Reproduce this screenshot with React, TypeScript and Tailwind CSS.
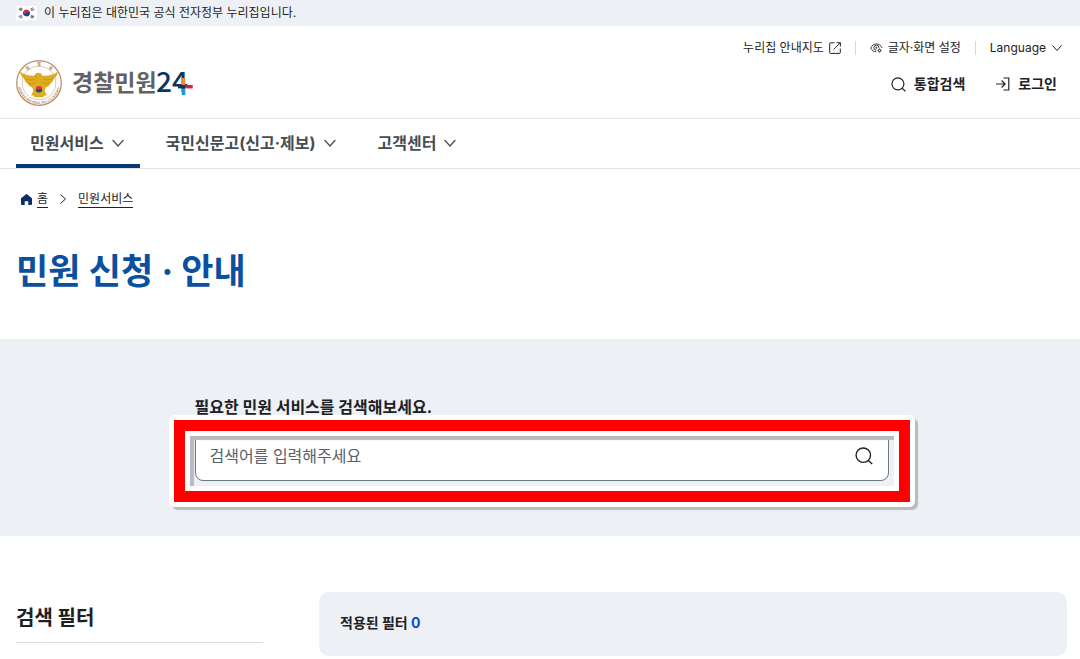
import React from "react";

type IconProps = { className?: string };

function Chevron({ className = "" }: IconProps) {
  return (
    <svg viewBox="0 0 12 12" className={className} fill="none" stroke="currentColor" strokeWidth="1.200" aria-hidden="true">
      <path d="M.6 3 6 9l5.400-6" />
    </svg>
  );
}

function SearchIcon({ className = "" }: IconProps) {
  return (
    <svg viewBox="0 0 18 18" className={className} fill="none" stroke="currentColor" strokeWidth="1.400" aria-hidden="true">
      <circle cx="8.300" cy="8.200" r="7.200" />
      <path d="m13.300 13.400 3.900 3.700" />
    </svg>
  );
}

function LoginIcon() {
  return (
    <svg viewBox="0 0 14 14" className="size-3.5" fill="none" stroke="currentColor" strokeWidth="1.200" aria-hidden="true">
      <path d="M0 7h8.800M5.600 3.500 9.100 7l-3.500 3.500M7.500 1h5.300v12H7.500" />
    </svg>
  );
}

function ExternalIcon() {
  return (
    <svg viewBox="0 0 12 12" className="size-3" fill="none" stroke="currentColor" aria-hidden="true">
      <path d="M5.500.8H1.500a.8.800 0 0 0-.8.800v9a.8.800 0 0 0 .8.800h9a.8.800 0 0 0 .8-.8v-4M7.500.7h3.900v3.800M11.300.8 4.500 7.600" />
    </svg>
  );
}

function DisplayIcon() {
  return (
    <svg viewBox="0 0 13 12" className="h-3 w-[13px]" fill="none" stroke="currentColor" strokeWidth=".9" aria-hidden="true">
      <path d="M6.200 9.800C3.700 9.800 1.800 8.300.7 6 1.900 3.500 3.900 1.900 6.400 1.900s4.500 1.600 5.700 4.100" />
      <path d="M8.900 5.800A2.500 2.500 0 1 0 6.300 8.200" />
      <circle cx="6.400" cy="5.800" r=".6" />
      <circle cx="9.500" cy="8.500" r="1.200" />
      <path d="M9.500 6.400v.9m0 2.400v.9m-2.100-2.100h.9m2.400 0h.9M8 7l.6.600m1.800 1.800.6.600m0-3-.6.600M8.600 9.400l-.6.600" strokeWidth=".6" />
    </svg>
  );
}

function HomeIcon() {
  return (
    <svg viewBox="0 0 11 11" className="size-[11px]" fill="#0b2d69" aria-hidden="true">
      <path d="M5 .2a.8.800 0 0 1 1 0L10.600 4a1 1 0 0 1 .4.800V10a1 1 0 0 1-1 1H7.300V7.300H3.700V11H1a1 1 0 0 1-1-1V4.800A1 1 0 0 1 .4 4Z" />
    </svg>
  );
}

function Flag() {
  return (
    <svg viewBox="0 0 21 14" className="h-3.5 w-[21px]" aria-hidden="true">
      <path fill="#fff" d="M0 0h21v14H0z" />
      <g transform="rotate(25 10.500 7)">
        <path d="M7.100 7a3.400 3.400 0 0 1 6.800 0Z" fill="#cd2e3a" />
        <path d="M7.100 7a3.400 3.400 0 0 0 6.800 0Z" fill="#0f4796" />
        <circle cx="8.800" cy="7" r="1.700" fill="#cd2e3a" />
        <circle cx="12.200" cy="7" r="1.700" fill="#0f4796" />
      </g>
      <g stroke="#222" strokeWidth=".8">
        <path d="m3 3.900 1.700-2.400m-.8 3L5.600 2.100m-.8 3 1.700-2.400" />
        <path d="m14.500 11.300 1.700-2.400m-.8 3 1.700-2.400m-.8 3L18 10.100" />
        <path d="m3 10.100 1.700 2.400m-.8-3 1.700 2.400m-.8-3 1.700 2.400" strokeDasharray="1.300 .4" />
        <path d="m14.500 2.700 1.700 2.400m-.8-3 1.700 2.400m-.8-3L18 3.900" strokeDasharray="1.300 .4" />
      </g>
    </svg>
  );
}

function Emblem() {
  return (
    <svg viewBox="0 0 46 46" className="size-[46px]" aria-hidden="true">
      <defs>
        <path id="ring-bottom" d="M1.900 20a21.300 21.300 0 1 0 42.200 0" />
      </defs>
      <circle cx="23" cy="23" r="22.300" fill="#fff" stroke="#b98a61" strokeWidth="1.200" />
      <circle cx="23" cy="23" r="16.800" fill="none" stroke="#c9a17c" strokeWidth=".6" />
      <g fill="#a47b57" fontFamily="'Noto Sans CJK KR', sans-serif" fontWeight="700" textAnchor="middle">
        <text x="23" y="5.800" fontSize="4" transform="rotate(-38 23 23)">경</text>
        <text x="23" y="5.800" fontSize="4">찰</text>
        <text x="23" y="5.800" fontSize="4" transform="rotate(38 23 23)">청</text>
        <text fontSize="3.400" fontWeight="500">
          <textPath href="#ring-bottom" startOffset="50%">KOREAN NATIONAL POLICE AGENCY</textPath>
        </text>
      </g>
      <path
        fill="#e0ab1c"
        d="M4 11.500c4.500 3.500 10 4.600 14.800 4.200.2-1.900 1.600-2.900 3.500-2.900 2.300 0 3.600 1.200 4.100 2.900 5.400.5 10.800-.7 15.600-4.200-.5 3.700-2 6-4.200 7.100-.4 2.500-1.600 4.100-3.500 4.900-.8 2.100-2.300 3.300-4.500 3.700l-1.200 3.800 2.300 4.300-2.700.5-.9 1.500h-8.600l-.9-1.500-2.700-.5 2.300-4.300-1.200-3.800c-2.200-.4-3.700-1.600-4.500-3.700-1.900-.8-3.100-2.400-3.500-4.900-2.200-1.100-3.700-3.400-4.200-7.100Z"
      />
      <path d="M8 18.300c4 1.900 7.500 2 11 1.200M11.500 23c3 1 5.500.8 8-.3M38 18.300c-4 1.900-7.500 2-11 1.200M34.500 23c-3 1-5.500.8-8-.3" fill="none" stroke="#b98519" strokeWidth=".6" />
      <path d="m20 15.300-2.500 1 2.700.6Z" fill="#b98519" />
      <path d="M19.800 29.300a3.200 3.200 0 0 1 6.400 0Z" fill="#d43a3d" />
      <path d="M19.800 29.300a3.200 3.200 0 0 0 6.400 0Z" fill="#174783" />
    </svg>
  );
}

function Logo() {
  return (
    <svg viewBox="0 -6 126 46" className="h-[46px] w-[126px]" role="img" aria-label="경찰민원24" fontFamily="'Noto Sans CJK KR', sans-serif">
      <text x="-1" y="25" fontSize="23" fontWeight="700" fill="#626264">경찰민원</text>
      <text x="83" y="26" fontSize="28" fontWeight="500" fill="#093763">24</text>
      <path fill="#f58a3c" d="M108.700 12h3.600v7h-3.600z" />
      <path fill="#e0203d" d="M112.300 19h7.400v3.400h-7.400z" />
      <path fill="#189bd7" d="M108.700 22.400h3.600v6.600h-3.600z" />
      <path fill="#093763" d="M105 19h7.300v3.400H105z" />
    </svg>
  );
}

const menus = ["민원서비스", "국민신문고(신고·제보)", "고객센터"];

export default function App() {
  return (
    <div className="bg-white font-['Inter','Noto_Sans_CJK_KR',sans-serif] text-[#1e2124]">
      <div className="flex h-[26px] items-center gap-[7px] bg-[#edf1f5] px-4 text-xs leading-5">
        <Flag />
        <p>이 누리집은 대한민국 공식 전자정부 누리집입니다.</p>
      </div>

      <header>
        <div className="flex h-[93px] justify-between border-b border-[#e0e2e4] px-4">
          <a href="#home" className="flex items-center gap-[11px] pt-[22px]">
            <Emblem />
            <Logo />
          </a>
          <div className="flex flex-col items-end pt-3">
            <div className="flex h-5 items-center pr-0.5 text-xs leading-5">
              <a href="#sitemap" className="flex items-center gap-[5px]">
                누리집 안내지도 <ExternalIcon />
              </a>
              <span className="mx-[14px] h-3.5 w-px bg-[#d5d8dc]" />
              <button type="button" className="flex items-center gap-[5px]">
                <DisplayIcon /> 글자·화면 설정
              </button>
              <span className="mx-[14px] h-3.5 w-px bg-[#d5d8dc]" />
              <button type="button" className="flex items-center gap-1.5">
                Language <Chevron className="size-2.5" />
              </button>
            </div>
            <div className="mt-3.5 mr-[7px] flex h-6 items-center gap-[31px] text-sm font-bold">
              <button type="button" className="flex items-center gap-2">
                <SearchIcon className="size-[15px]" /> 통합검색
              </button>
              <button type="button" className="flex items-center gap-2">
                <LoginIcon /> 로그인
              </button>
            </div>
          </div>
        </div>
        <nav className="flex h-[50px] gap-3 border-b border-[#e0e2e4] px-4 text-base font-bold text-[#464c53]">
          {menus.map((menu, i) => (
            <button
              key={menu}
              type="button"
              className={
                i === 0
                  ? "flex items-center gap-2 border-b-4 border-[#063a74] pt-0.5 pr-4 pl-3.5"
                  : "flex items-center gap-2 border-b-4 border-transparent pt-0.5 pr-4 pl-3.5"
              }
            >
              {menu} <Chevron className="size-3" />
            </button>
          ))}
        </nav>
      </header>

      <main>
        <nav aria-label="breadcrumb" className="flex h-[60px] items-center gap-2.5 pl-[21px] text-xs leading-4">
          <a href="#home" className="flex items-center gap-[5px]">
            <HomeIcon />
            <span className="border-b border-current">홈</span>
          </a>
          <Chevron className="size-2.5 -rotate-90" />
          <a href="#service" className="border-b border-current">민원서비스</a>
        </nav>
        <h1 className="px-4 pt-[18px] pb-11 text-[35px] leading-[48px] font-bold text-[#0b50a0]">민원 신청 · 안내</h1>

        <section className="bg-[#edf1f5] pt-14 pr-[13px] pb-[55px] pl-4">
          <form className="mx-auto max-w-[694px]" onSubmit={(e) => e.preventDefault()}>
            <label htmlFor="query" className="block text-base leading-6 font-bold">
              필요한 민원 서비스를 검색해보세요.
            </label>
            <div className="relative mt-3">
              <div className="flex h-[50px] items-center rounded-lg border border-[#6d7882] bg-white pr-[15px] pl-3.5">
                <input
                  id="query"
                  type="text"
                  placeholder="검색어를 입력해주세요"
                  className="min-w-0 flex-1 bg-transparent text-base outline-none placeholder:text-[#58616a]"
                />
                <button type="submit" aria-label="검색">
                  <SearchIcon className="size-[18px]" />
                </button>
              </div>
              <div className="pointer-events-none absolute -top-4 -right-[26px] -bottom-[26px] -left-[26px] rounded-md border-5 border-white shadow-[3px_3px_1px_#b8bbbe]">
                <div className="h-full border-11 border-[#ff0000]">
                  <div className="h-full border-5 border-white shadow-[inset_4px_4px_1px_#b8bbbe]" />
                </div>
              </div>
            </div>
          </form>
        </section>

        <section className="flex items-start gap-14 pt-14 pr-[13px] pl-4">
          <h2 className="mt-3 w-[247px] shrink-0 border-b border-[#d9dcdf] pb-2.5 text-xl leading-7 font-bold">검색 필터</h2>
          <div className="flex h-16 flex-1 items-center rounded-[10px] bg-[#edf1f5] px-[21px] pb-0.5 text-sm font-bold">
            <p>
              적용된 필터 <span className="text-[#0b50d0]">0</span>
            </p>
          </div>
        </section>
      </main>
    </div>
  );
}
